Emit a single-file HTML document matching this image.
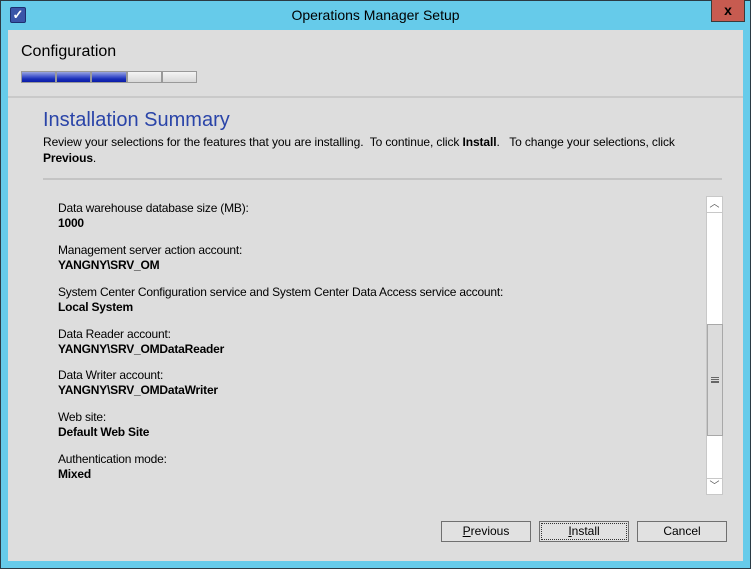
<!DOCTYPE html>
<html><head><style>
*{margin:0;padding:0;box-sizing:border-box}
body{width:751px;height:569px;background:#66cbea;position:relative;overflow:hidden;font-family:"Liberation Sans",sans-serif;font-size:12px;color:#000}
.frame{position:absolute;left:0;top:0;width:751px;height:569px;border:1px solid #2b3a44}
.client{position:absolute;left:8px;top:30px;width:735px;height:531px;background:#dddddd}
.title{position:absolute;left:0;top:7px;width:751px;text-align:center;font-size:14px;color:#000}
.icon{position:absolute;left:10px;top:7px;width:16px;height:16px;background:#3a55a8;border:1px solid #1d2f70;border-radius:2px;color:#fff;font-size:13px;line-height:14px;text-align:center;font-weight:bold}
.close{position:absolute;left:711px;top:0;width:34px;height:22px;background:#c75b50;border:1px solid #3a3a3a;border-top:none;text-align:center;font-weight:bold;font-size:14px;line-height:20px}
.abs{position:absolute}
.seg{position:absolute;top:71px;height:12px;width:35px;border:1px solid #999}
.blue{background:linear-gradient(#9aa6e0,#4d5fd0 40%,#1a2fb8 70%,#0a1aa8)}
.gray{background:linear-gradient(#f4f4f4,#d8d8d8)}
.item{position:absolute;left:58px;line-height:15px;letter-spacing:-0.2px}
.item b{display:block}
.btn{position:absolute;top:521px;height:21px;width:90px;border:1px solid #707070;background:#e1e1e1;text-align:center;line-height:19px}
</style></head><body>
<div class="frame"></div>
<div class="icon">✓</div>
<div class="title">Operations Manager Setup</div>
<div class="close">x</div>
<div class="client"></div>
<div class="abs" style="left:21px;top:43px;font-size:16px">Configuration</div>
<div class="seg blue" style="left:21px"></div>
<div class="seg blue" style="left:56px"></div>
<div class="seg blue" style="left:91px;width:36px"></div>
<div class="seg gray" style="left:127px"></div>
<div class="seg gray" style="left:162px"></div>
<div class="abs" style="left:8px;top:96px;width:735px;height:2px;background:#c9c9c9"></div>
<div class="abs" style="left:43px;top:109px;font-size:20px;color:#2a44a8">Installation Summary</div>
<div class="abs" style="left:43px;top:134px;line-height:16px;width:670px;letter-spacing:-0.1px">Review your selections for the features that you are installing.&nbsp; To continue, click <b>Install</b>.&nbsp;&nbsp; To change your selections, click<br><b>Previous</b>.</div>
<div class="abs" style="left:43px;top:178px;width:679px;height:2px;background:#c4c4c4"></div>
<div class="item" style="top:201px">Data warehouse database size (MB):<b>1000</b></div>
<div class="item" style="top:243px">Management server action account:<b>YANGNY\SRV_OM</b></div>
<div class="item" style="top:285px">System Center Configuration service and System Center Data Access service account:<b>Local System</b></div>
<div class="item" style="top:327px">Data Reader account:<b>YANGNY\SRV_OMDataReader</b></div>
<div class="item" style="top:368px">Data Writer account:<b>YANGNY\SRV_OMDataWriter</b></div>
<div class="item" style="top:410px">Web site:<b>Default Web Site</b></div>
<div class="item" style="top:452px">Authentication mode:<b>Mixed</b></div>
<div class="abs" style="left:706px;top:196px;width:17px;height:299px;background:#fff;border:1px solid #c8c8c8"></div>
<div class="abs" style="left:706px;top:196px;width:17px;height:17px;border:1px solid #c8c8c8;text-align:center;font-size:10px;color:#555;line-height:15px">︿</div>
<div class="abs" style="left:706px;top:478px;width:17px;height:17px;border:1px solid #c8c8c8;text-align:center;font-size:10px;color:#555;line-height:15px">﹀</div>
<div class="abs" style="left:707px;top:324px;width:16px;height:112px;background:#dcdcdc;border:1px solid #a8a8a8"></div>
<div class="abs" style="left:711px;top:377px;width:8px;height:6px;border-top:1px solid #666;border-bottom:1px solid #666"></div>
<div class="abs" style="left:711px;top:379px;width:8px;height:1px;background:#666"></div>
<div class="abs" style="left:711px;top:381px;width:8px;height:1px;background:#666"></div>
<div class="btn" style="left:441px"><u>P</u>revious</div>
<div class="btn" style="left:539px;outline:1px dotted #333;outline-offset:-3px"><u>I</u>nstall</div>
<div class="btn" style="left:637px">Cancel</div>
</body></html>
